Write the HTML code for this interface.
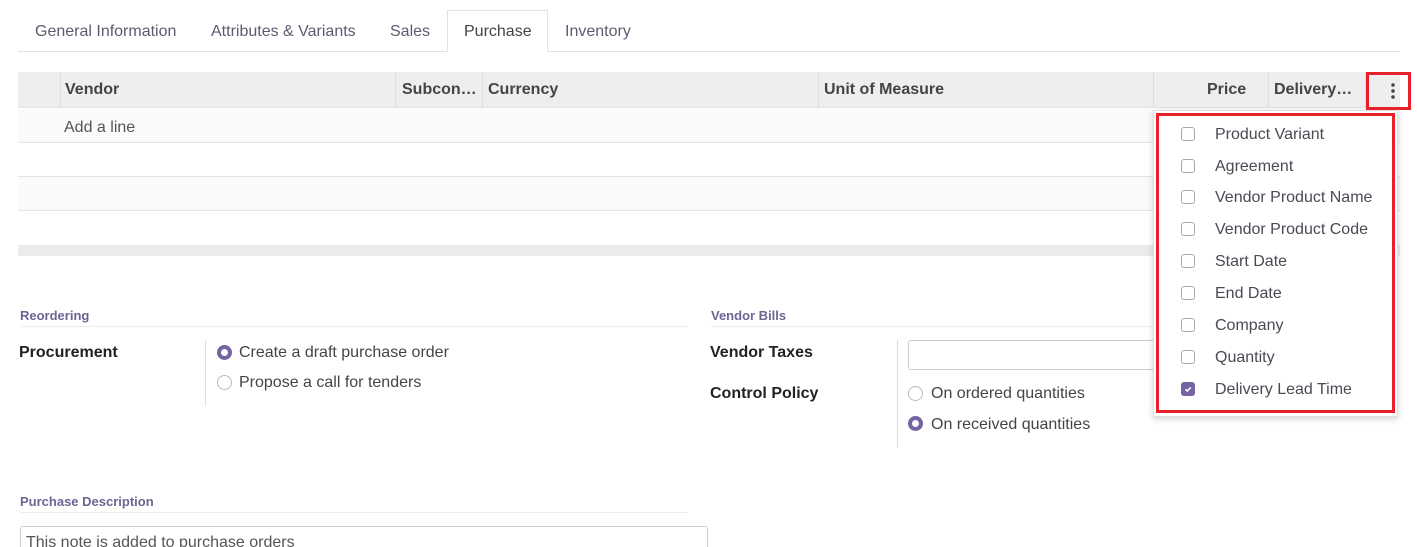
<!DOCTYPE html>
<html><head><style>
*{box-sizing:border-box;margin:0;padding:0}
html,body{width:1417px;height:547px;overflow:hidden}
body{background:#fff;font-family:"Liberation Sans",Arial,sans-serif;color:#444;position:relative}
.a{position:absolute;white-space:nowrap}
.tab{font-size:16px;color:#5f5b6e;top:23px}
.th{font-size:16px;font-weight:bold;color:#444;top:81px}
.vl{position:absolute;width:1px;background:#ddd}
.hl{position:absolute;height:1px;background:#e4e4e4}
.cb{position:absolute;left:1181px;width:14px;height:14px;border:1px solid #aaa;border-radius:3px;background:#fff}
.it{font-size:16px;color:#4a4a55;left:1215px}
.sec{font-size:13px;font-weight:bold;color:#6f6493}
.lab{font-size:16px;font-weight:bold;color:#222}
.rad{position:absolute;width:15px;height:15px;border:1px solid #bbb;border-radius:50%;background:#fff}
.rad.on{border:4px solid #7664a2}
.txt{font-size:16px;color:#444}
</style></head><body>
<div class="hl" style="left:18px;top:51px;width:1382px;background:#dee2e6"></div>
<div class="a" style="left:447px;top:10px;width:101px;height:42px;border:1px solid #dee2e6;border-bottom:none;background:#fff"></div>
<div class="a tab" style="left:35px">General Information</div>
<div class="a tab" style="left:211px">Attributes &amp; Variants</div>
<div class="a tab" style="left:390px">Sales</div>
<div class="a tab" style="left:464px;color:#444">Purchase</div>
<div class="a tab" style="left:565px">Inventory</div>
<div class="a" style="left:18px;top:72px;width:1382px;height:36px;background:#eeeeee;border-bottom:1px solid #e2e2e2"></div>
<div class="vl" style="left:60px;top:72px;height:36px"></div>
<div class="vl" style="left:395px;top:72px;height:36px"></div>
<div class="vl" style="left:482px;top:72px;height:36px"></div>
<div class="vl" style="left:818px;top:72px;height:36px"></div>
<div class="vl" style="left:1153px;top:72px;height:36px"></div>
<div class="vl" style="left:1268px;top:72px;height:36px"></div>
<div class="vl" style="left:1365px;top:72px;height:36px"></div>
<div class="a th" style="left:65px">Vendor</div>
<div class="a th" style="left:402px">Subcon…</div>
<div class="a th" style="left:488px">Currency</div>
<div class="a th" style="left:824px">Unit of Measure</div>
<div class="a th" style="left:1207px">Price</div>
<div class="a th" style="left:1274px">Delivery…</div>
<div class="a" style="left:1391px;top:82px;width:4px;height:18px;background:radial-gradient(circle,#444 1.7px,transparent 1.9px) 0 0/4px 6px repeat-y"></div>
<div class="a" style="left:18px;top:109px;width:1382px;height:34px;background:#fafafa;border-bottom:1px solid #e4e4e4"></div>
<div class="a txt" style="left:64px;top:119px;color:#555">Add a line</div>
<div class="a" style="left:18px;top:143px;width:1382px;height:34px;border-bottom:1px solid #e4e4e4"></div>
<div class="a" style="left:18px;top:177px;width:1382px;height:34px;background:#fafafa;border-bottom:1px solid #e4e4e4"></div>
<div class="a" style="left:18px;top:245px;width:1382px;height:11px;background:#ebebeb"></div>
<div class="a sec" style="left:20px;top:308px">Reordering</div>
<div class="hl" style="left:20px;top:326px;width:668px;background:#eee"></div>
<div class="a lab" style="left:19px;top:344px">Procurement</div>
<div class="vl" style="left:205px;top:340px;height:66px"></div>
<div class="rad on" style="left:217px;top:345px"></div>
<div class="a txt" style="left:239px;top:344px">Create a draft purchase order</div>
<div class="rad" style="left:217px;top:375px"></div>
<div class="a txt" style="left:239px;top:374px">Propose a call for tenders</div>
<div class="a sec" style="left:20px;top:494px">Purchase Description</div>
<div class="hl" style="left:20px;top:512px;width:668px;background:#eee"></div>
<div class="a" style="left:20px;top:526px;width:688px;height:30px;border:1px solid #ccc;border-radius:3px"></div>
<div class="a txt" style="left:26px;top:534px;color:#555">This note is added to purchase orders</div>
<div class="a sec" style="left:711px;top:308px">Vendor Bills</div>
<div class="hl" style="left:711px;top:326px;width:450px;background:#eee"></div>
<div class="a lab" style="left:710px;top:344px">Vendor Taxes</div>
<div class="a" style="left:908px;top:340px;width:260px;height:30px;border:1px solid #ccc;border-radius:3px"></div>
<div class="vl" style="left:897px;top:340px;height:108px"></div>
<div class="a lab" style="left:710px;top:385px">Control Policy</div>
<div class="rad" style="left:908px;top:386px"></div>
<div class="a txt" style="left:931px;top:385px">On ordered quantities</div>
<div class="rad on" style="left:908px;top:416px"></div>
<div class="a txt" style="left:931px;top:416px">On received quantities</div>
<div class="a" style="left:1153px;top:110px;width:245px;height:307px;background:#fff;box-shadow:0 2px 6px rgba(0,0,0,.18);border:1px solid #e0e0e0"></div>
<div class="a" style="left:1156px;top:113px;width:239px;height:300px;border:3px solid #e8202a"></div>
<div class="a" style="left:1366px;top:72px;width:45px;height:38px;border:3px solid #e8202a"></div>
<div class="cb" style="top:127px"></div><div class="a it" style="top:126px">Product Variant</div>
<div class="cb" style="top:159px"></div><div class="a it" style="top:158px">Agreement</div>
<div class="cb" style="top:190px"></div><div class="a it" style="top:189px">Vendor Product Name</div>
<div class="cb" style="top:222px"></div><div class="a it" style="top:221px">Vendor Product Code</div>
<div class="cb" style="top:254px"></div><div class="a it" style="top:253px">Start Date</div>
<div class="cb" style="top:286px"></div><div class="a it" style="top:285px">End Date</div>
<div class="cb" style="top:318px"></div><div class="a it" style="top:317px">Company</div>
<div class="cb" style="top:350px"></div><div class="a it" style="top:349px">Quantity</div>
<div class="cb" style="top:382px;background:#7664a2;border-color:#7664a2"><svg width="12" height="12" viewBox="0 0 12 12" style="position:absolute;left:0;top:0"><path d="M3.5 6.2l1.8 1.8 3.4-3.6" stroke="#fff" stroke-width="1.6" fill="none"/></svg></div>
<div class="a it" style="top:381px">Delivery Lead Time</div>
</body></html>
